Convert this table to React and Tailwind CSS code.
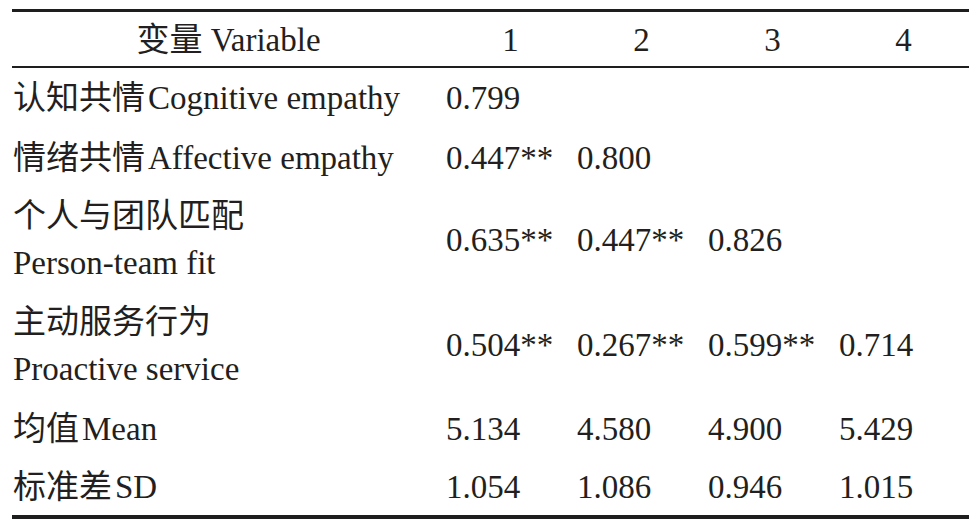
import React from "react";

const rows = [
  { cn: "认知共情", en: "Cognitive empathy", vals: ["0.799", "", "", ""], h: "h-[60px]" },
  { cn: "情绪共情", en: "Affective empathy", vals: ["0.447**", "0.800", "", ""], h: "h-[60px]" },
  { cn: "个人与团队匹配", en: "Person-team fit", two: true, vals: ["0.635**", "0.447**", "0.826", ""], h: "h-[104px]" },
  { cn: "主动服务行为", en: "Proactive service", two: true, vals: ["0.504**", "0.267**", "0.599**", "0.714"], h: "h-[107px]" },
  { cn: "均值", en: "Mean", vals: ["5.134", "4.580", "4.900", "5.429"], h: "h-[60px]" },
  { cn: "标准差", en: "SD", vals: ["1.054", "1.086", "0.946", "1.015"], h: "h-[56px]" },
];

export default function App() {
  return (
    <div
      className="w-[977px] h-[531px] bg-white text-[#231f20] text-[33px] pt-[9px] pl-[12px]"
      style={{ fontFamily: '"Liberation Serif", "Noto Sans CJK SC", serif' }}
    >
      <div className="w-[957px] border-t-[3px] border-b-[4px] border-[#1e1e1e]">
        <div className="grid grid-cols-[433px_131px_131px_131px_131px] h-[56px] items-center border-b-[2px] border-[#1e1e1e] leading-none pt-[2px]">
          <div className="text-center">变量 Variable</div>
          <div className="text-center">1</div>
          <div className="text-center">2</div>
          <div className="text-center">3</div>
          <div className="text-center">4</div>
        </div>
        {rows.map((r, i) => (
          <div
            key={i}
            className={`grid grid-cols-[433px_131px_131px_131px_131px] items-center ${r.h}`}
          >
            <div className="pl-[1px] leading-[47px] whitespace-nowrap">
              {r.two ? (
                <>
                  <div>{r.cn}</div>
                  <div>{r.en}</div>
                </>
              ) : (
                <div>
                  <span>{r.cn}</span>
                  <span className="ml-[3px]">{r.en}</span>
                </div>
              )}
            </div>
            {r.vals.map((v, j) => (
              <div key={j} className="pl-[1px] leading-[47px] whitespace-nowrap">
                {v}
              </div>
            ))}
          </div>
        ))}
      </div>
    </div>
  );
}
